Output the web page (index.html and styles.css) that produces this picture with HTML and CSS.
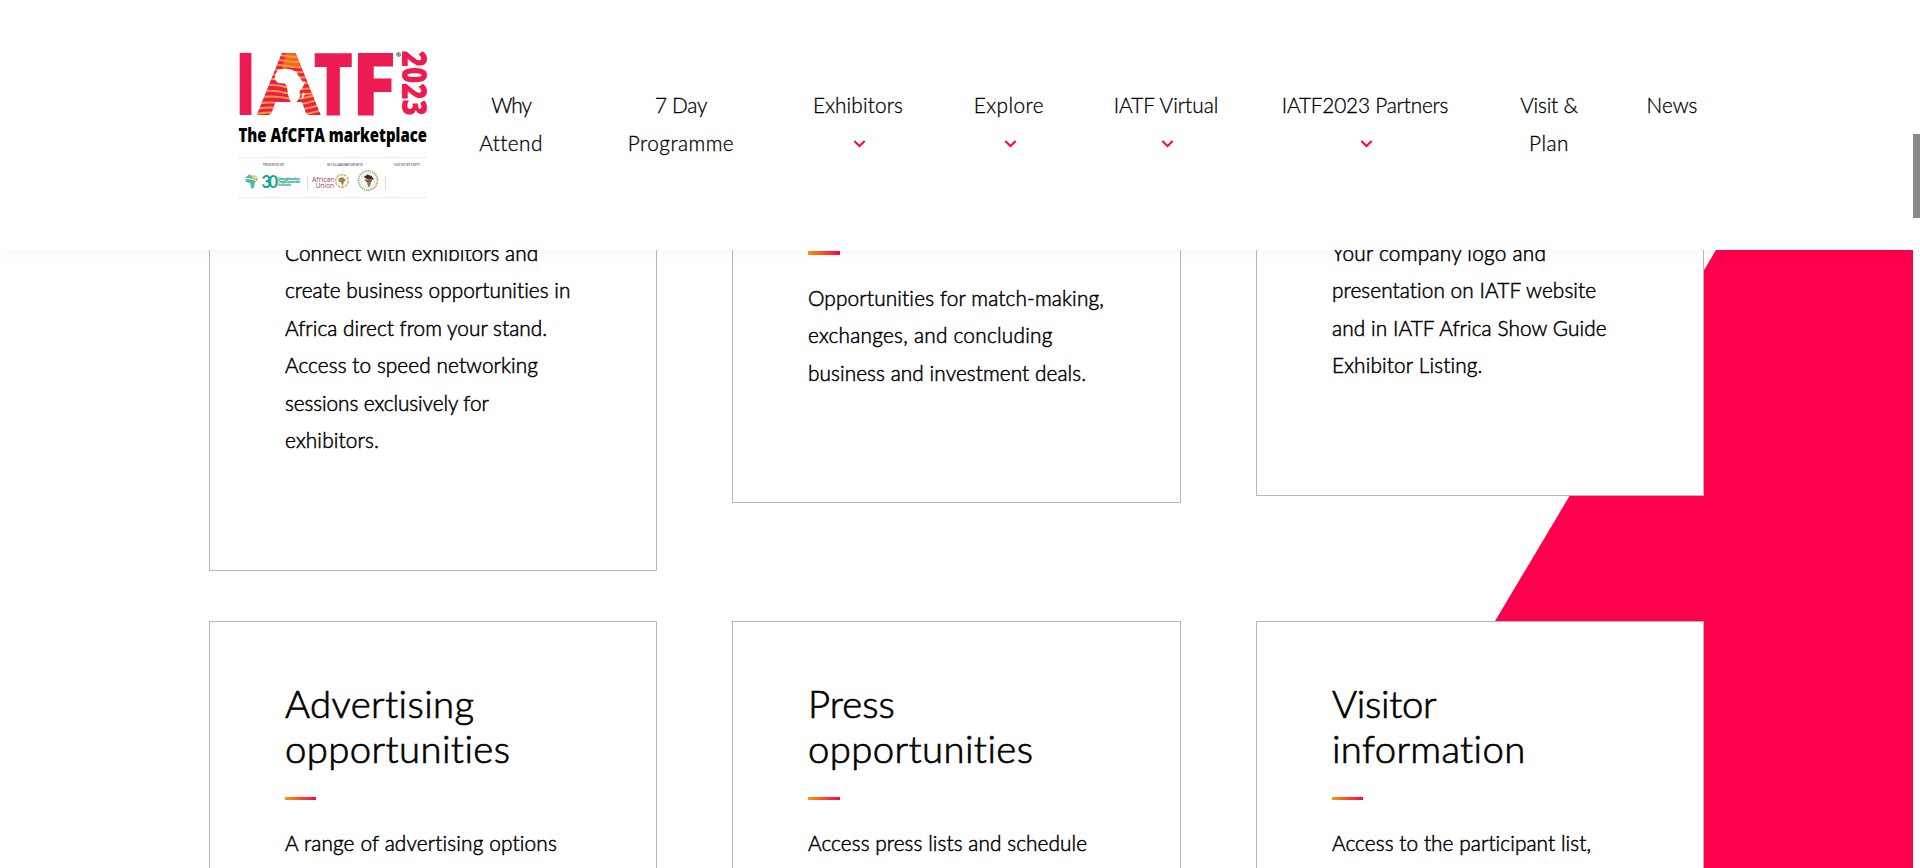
FILE: index.html
```
<!DOCTYPE html>
<html lang="en">
<head>
<meta charset="utf-8">
<title>IATF2023</title>
<link rel="stylesheet" href="styles.css">
</head>
<body>
<div class="page">
<header class="header">
  <svg class="logo" viewBox="225 40 215 170" width="215" height="170" role="img" aria-label="IATF 2023">
    <defs>
      <clipPath id="a-clip"><text x="257.8" y="114.5" class="logo-a" textLength="62" lengthAdjust="spacingAndGlyphs">A</text><path d="M281 62h16l14 40h-45z"/></clipPath>
    </defs>
    <g class="logo-word">
      <text x="234.9" y="114.5" textLength="21.1" lengthAdjust="spacingAndGlyphs">I</text>
      <text x="257.8" y="114.5" class="logo-a" textLength="62" lengthAdjust="spacingAndGlyphs">A</text>
      <text x="313" y="114.5" textLength="40.5" lengthAdjust="spacingAndGlyphs">T</text>
      <text x="351.5" y="114.5" textLength="44.8" lengthAdjust="spacingAndGlyphs">F</text>
    </g>
    <g clip-path="url(#a-clip)">
      <path d="M256 50h66v66h-66z" fill="#ec1c52"/>
      <path class="stripe" d="M256 56q16-3 30 0t36-2M256 61q16-3 30 0t36-2M256 66q16-3 30 0t36-2M256 71q16-3 30 0t36-1M256 76q16-3 30 0t36 0M256 81q16-4 30 0t36 1M256 87q16-4 30 0t36 0M256 92q16-3 30 1t36-2M256 98q16-3 30 0t36-5M256 104q16-3 30 0t36-6M256 109q16-3 30 0t36-5M256 114q16-3 30 0t36-4"/>
      <path d="M286 52h11l4 17-10-2-9 2z" fill="#f7941e" opacity=".6"/>
    </g>
    <path d="M278 70l7-1.500 6 1 5 2 3 5 3.500 5h3l-3 6-3 4 .5 5-3 5-3 2h-3l-3-9-1-8-2-3-7-.5-3.500-4 1-5z" fill="#fff"/>
    <path d="M302.500 94l1.500-2 .8 2-2 5-1.400-1z" fill="#fff"/>
    <text x="396" y="56.500" class="logo-reg">®</text>
    <text transform="translate(402 50.800) rotate(90)" class="logo-year" textLength="65" lengthAdjust="spacingAndGlyphs">2023</text>
    <text x="238.500" y="141.700" class="logo-tag" textLength="188.500" lengthAdjust="spacingAndGlyphs">The AfCFTA marketplace</text>
    <path d="M239 157.500h188M239 197.500h188" class="logo-rule"/>
    <g class="logo-tiny">
      <text x="263" y="165.500" textLength="21">PRESENTED BY</text>
      <text x="327" y="165.500" textLength="36">IN COLLABORATION WITH</text>
      <text x="394" y="165.500" textLength="26">HOSTED BY EGYPT</text>
    </g>
    <path d="M245 178l4-3.500 5 1 4 4-3 3-1 5-2.500 1.500-1.500-6-4-1z" fill="#58b7a5"/>
    <path d="M245 178.500l7 .5 6 3" stroke="#fff" fill="none"/>
    <path d="M250 175l5 0 3.500 3-3 2z" fill="#e8d67c"/>
    <text x="261.500" y="187.500" class="logo-thirty">30</text>
    <g class="logo-bank">
      <text x="278" y="179.500" textLength="22">Delivering Extraordinary</text>
      <text x="278" y="182.700" textLength="22">Trade &amp; Opportunities</text>
      <text x="278" y="186" textLength="13">for Africans</text>
    </g>
    <path d="M307.500 176v14M385.500 176v14" stroke="#ddd" fill="none"/>
    <g class="logo-union">
      <text x="312" y="181.500" textLength="22.500" lengthAdjust="spacingAndGlyphs">African</text>
      <text x="315.500" y="188" textLength="18.500" lengthAdjust="spacingAndGlyphs">Union</text>
    </g>
    <circle cx="342" cy="181" r="6.300" fill="none" stroke="#c8b07a" stroke-width="1.500" stroke-dasharray="3 .8"/>
    <path d="M338.500 178.500l4-1.500 3.500 3-2 2-1.500 4.500-1.500-4-2.500-1z" fill="#a88643"/>
    <circle cx="368" cy="180.500" r="9.500" fill="#fff" stroke="#a9b596" stroke-width="2" stroke-dasharray="1.500 .7"/>
    <circle cx="368" cy="180.500" r="7" fill="none" stroke="#dccfb9" stroke-width=".8"/>
    <path d="M363.500 177l4-2.500 4 1.500 2.500 3.500h-6z" fill="#26362b"/>
    <path d="M364 179.500h9l-2.500 3.500-4-1z" fill="#cf3a2d"/>
    <path d="M367 182l4 .5-1 3.500-2 1z" fill="#3b9a4c"/>
  </svg>
  <nav class="nav">
    <a class="link"><span class="n-why">Why</span><br><span class="n-wide">Attend</span></a>
    <a class="link"><span class="n-day">7 Day</span><br><span class="n-wide">Programme</span></a>
    <a class="link">Exhibitors<svg class="chev" viewBox="0 0 12 8"><path d="M.8 1l5.200 5 5.200-5"/></svg></a>
    <a class="link"><span class="n-wide">Explore</span><svg class="chev" viewBox="0 0 12 8"><path d="M.8 1l5.200 5 5.200-5"/></svg></a>
    <a class="link"><span class="n-plain">IATF Virtual</span><svg class="chev" viewBox="0 0 12 8"><path d="M.8 1l5.200 5 5.200-5"/></svg></a>
    <a class="link tight">IATF2023 Partners<svg class="chev" viewBox="0 0 12 8"><path d="M.8 1l5.200 5 5.200-5"/></svg></a>
    <a class="link tight">Visit &amp;<br><span class="n-wide">Plan</span></a>
    <a class="link"><span class="n-plain">News</span></a>
  </nav>
</header>
<main class="main">
  <svg class="slant" viewBox="1340 250 573 618" width="573" height="618"><path d="M1716 250H1913V868H1348z" fill="#ff004c"/></svg>
  <section class="cards first">
    <article class="card tall">
      <p class="text"><span class="t1">Connect with exhibitors and</span><br><span class="t1">create business opportunities in</span><br><span class="t1">Africa direct from your stand.</span><br><span class="t2">Access to speed networking</span><br><span class="t0">sessions exclusively for</span><br><span class="t3">exhibitors.</span></p>
    </article>
    <article class="card mid">
      <div class="bar thick"></div>
      <p class="text"><span class="t3">Opportunities for match-making,</span><br><span class="t4">exchanges, and concluding</span><br><span class="t2">business and investment deals.</span></p>
    </article>
    <article class="card short">
      <p class="text"><span class="t4">Your company logo and</span><br><span class="t2">presentation on IATF website</span><br><span class="t2">and in IATF Africa Show Guide</span><br><span class="t3">Exhibitor Listing.</span></p>
    </article>
  </section>
  <section class="cards second">
    <article class="card">
      <h2 class="title">Advertising<br>opportunities</h2>
      <div class="bar"></div>
      <p class="text t3">A range of advertising options</p>
    </article>
    <article class="card">
      <h2 class="title"><span class="h3">Press</span><br>opportunities</h2>
      <div class="bar wide"></div>
      <p class="text t2">Access press lists and schedule</p>
    </article>
    <article class="card">
      <h2 class="title"><span class="h2">Visitor</span><br><span class="h1">information</span></h2>
      <div class="bar"></div>
      <p class="text t2">Access to the participant list,</p>
    </article>
  </section>
</main>
<div class="thumb"></div>
</div>
</body>
</html>
```
FILE: styles.css
```
body {
  margin: 0;
  background: #fff;
  color: #000;
  font-family: Lato, "Open Sans", sans-serif;
  font-variant-ligatures: none;
}
.page {
  position: relative;
  height: 868px;
  overflow: hidden;
}
.header {
  position: relative;
  z-index: 2;
  box-sizing: border-box;
  height: 250px;
  padding-left: 225px;
  display: flex;
  background: #fff;
  box-shadow: 0 0 20px rgba(0, 0, 0, .05);
}
.logo {
  display: block;
  flex: none;
  margin-top: 40px;
}
.logo-word { font: 800 86.5px "Open Sans", sans-serif; fill: #ec1c52; }
.logo-a { font: 900 86.5px Lato, sans-serif; }
.logo-year { font: 800 34.5px "Open Sans", sans-serif; fill: #ec1c52; }
.logo-tag { font: 800 19.5px "Open Sans", sans-serif; fill: #000; }
.logo-reg { font: 700 6px "Open Sans", sans-serif; }
.logo-tiny { font: 3px "Open Sans", sans-serif; fill: #222; }
.logo-thirty { font: 700 16.5px Lato, sans-serif; fill: #17a589; letter-spacing: -2.5px; }
.logo-bank { font: 700 3px "Open Sans", sans-serif; fill: #2bab92; }
.logo-union { font: 7.5px "Open Sans", sans-serif; fill: #a23a55; }
.logo-rule { stroke: #ccc; stroke-width: .8; stroke-dasharray: 1 1.5; fill: none; }
.stripe { stroke: #f9a02c; stroke-width: 1.9; fill: none; }

.nav {
  display: grid;
  grid-template-columns: 142px 198px 156px 146px 168px 230px 138px 108px;
  padding-top: 86px;
}
.link {
  font-size: 20.8px;
  font-weight: 300;
  line-height: 37.6px;
  text-align: center;
  letter-spacing: .13px;
  white-space: nowrap;
  color: #000;
  -webkit-text-stroke: .3px #000;
}
.tight { letter-spacing: -.2px; }
.n-why { letter-spacing: -1px; }
.n-day { letter-spacing: -.3px; }
.n-wide { letter-spacing: .45px; }
.n-plain { letter-spacing: 0; }
.chev {
  display: block;
  width: 13px;
  height: 8px;
  margin: 16px auto 0;
  position: relative;
  left: 1px;
}
.chev path { fill: none; stroke: #ff004c; stroke-width: 2; }

.main { margin-top: -30px; }
.slant {
  position: absolute;
  top: 250px;
  left: 1340px;
}
.cards {
  position: relative;
  display: grid;
  grid-template-columns: 448px 449px 448px;
  column-gap: 75px;
  align-items: start;
  padding-left: 209px;
}
.first { height: 351px; }
.second { margin-top: 50px; }
.card {
  box-sizing: border-box;
  border: 1px solid #b9b9b9;
  background: #fff;
  padding: 58.5px 40px 0 75px;
  height: 320px;
}
.tall { height: 351px; padding-top: 12.8px; }
.mid { height: 283px; padding-top: 30px; }
.short { height: 276px; padding-top: 12.8px; }
.title {
  margin: 0;
  font-size: 38.3px;
  font-weight: 300;
  line-height: 45px;
  letter-spacing: .4px;
  -webkit-text-stroke: .7px #000;
}
.bar {
  width: 31px;
  height: 3px;
  margin: 26.5px 0 23.8px;
  background: linear-gradient(90deg, #ff9800, #ff004c);
}
.wide { width: 32px; }
.thick {
  width: 32px;
  height: 4px;
  margin: 0 0 24px;
}
.text {
  margin: 0;
  font-size: 20.8px;
  font-weight: 300;
  line-height: 37.44px;
  white-space: nowrap;
  -webkit-text-stroke: .5px #000;
}
.t0 { letter-spacing: -.08px; }
.t1 { letter-spacing: .04px; }
.t2 { letter-spacing: .08px; }
.t3 { letter-spacing: .15px; }
.t4 { letter-spacing: .25px; }
.h1 { letter-spacing: .35px; }
.h2 { letter-spacing: -.3px; }
.h3 { letter-spacing: 0; }
.thumb {
  position: absolute;
  z-index: 3;
  right: 0;
  top: 134px;
  width: 7px;
  height: 84px;
  background: #8a8a88;
}
```
